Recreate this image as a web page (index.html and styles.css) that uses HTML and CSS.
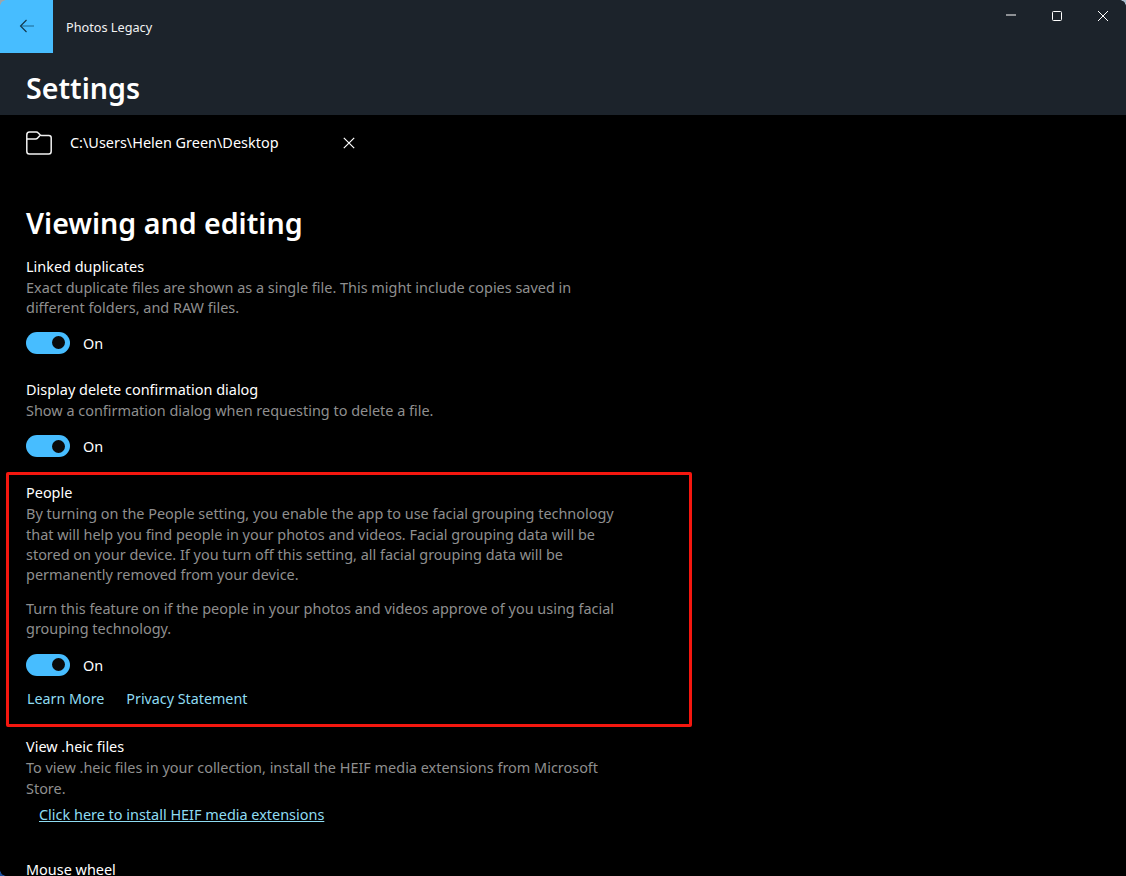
FILE: index.html
```html
<!DOCTYPE html>
<html lang="en">
<head>
    <meta charset="UTF-8">
    <title>Photos Legacy</title>
    <link rel="stylesheet" href="styles.css">
</head>
<body>
    <div class="window">
        <header class="top-bar">
            <div class="title-row">
                <button class="back-btn">
                    <svg width="16" height="14" viewBox="0 0 16 14" fill="none" stroke-width="1.1"><path stroke="#1f6f9c" d="M15 7H2"/><path stroke="#123447" d="M7.500 1L1.500 7l6 6"/></svg>
                </button>
                <span class="app-name">Photos Legacy</span>
                <div class="win-btns">
                    <svg width="12" height="12" viewBox="0 0 12 12" fill="none" stroke="#fff" stroke-width="1"><path d="M1 5h10"/></svg>
                    <svg width="12" height="12" viewBox="0 0 12 12" fill="none" stroke="#fff" stroke-width="1"><rect x="1.500" y="1.500" width="9" height="9" rx="1"/></svg>
                    <svg width="12" height="12" viewBox="0 0 12 12" fill="none" stroke="#fff" stroke-width="1"><path d="M1 1l10 10M11 1L1 11"/></svg>
                </div>
            </div>
            <h1 class="page-title">Settings</h1>
        </header>

        <main class="content">
            <div class="folder-row">
                <svg width="26" height="24" viewBox="0 0 26 24" fill="none" stroke="#f2f2f2" stroke-width="1.500"><path d="M.8 4C.8 2 1.800 1 3.500 1h6.700c1 0 1.500.3 2.100 1l1.500 1.600c.5.5 1 .8 1.700.8h7.400c1.500 0 2.300 1 2.300 2.400v13.400c0 1.800-.9 2.800-2.500 2.800H3.300C1.700 23 .8 22 .8 20.200z"/><path d="M.8 8h8.700c1 0 1.500-.3 2.100-.9l2.400-2.700"/></svg>
                <span class="folder-path">C:\Users\Helen Green\Desktop</span>
                <svg class="folder-x" width="12" height="12" viewBox="0 0 12 12" fill="none" stroke="#fff" stroke-width="1.200"><path d="M.8.800l10.400 10.400M11.200.800L.8 11.200"/></svg>
            </div>

            <h2 class="section-title">Viewing and editing</h2>

            <section class="setting">
                <h3>Linked duplicates</h3>
                <p>Exact duplicate files are shown as a single file. This might include copies saved in<br>different folders, and RAW files.</p>
                <div class="toggle-row"><span class="toggle"></span><span>On</span></div>
            </section>

            <section class="setting setting-delete">
                <h3>Display delete confirmation dialog</h3>
                <p>Show a confirmation dialog when requesting to delete a file.</p>
                <div class="toggle-row"><span class="toggle"></span><span>On</span></div>
            </section>

            <section class="setting people-box">
                <h3>People</h3>
                <p>By turning on the People setting, you enable the app to use facial grouping technology<br>that will help you find people in your photos and videos. Facial grouping data will be<br>stored on your device. If you turn off this setting, all facial grouping data will be<br>permanently removed from your device.</p>
                <p class="second-para">Turn this feature on if the people in your photos and videos approve of you using facial<br>grouping technology.</p>
                <div class="toggle-row"><span class="toggle"></span><span>On</span></div>
                <div class="link-row">
                    <a href="#">Learn More</a>
                    <a href="#">Privacy Statement</a>
                </div>
            </section>

            <section class="setting heic">
                <h3>View .heic files</h3>
                <p>To view .heic files in your collection, install the HEIF media extensions from Microsoft<br>Store.</p>
                <a class="install-link" href="#">Click here to install HEIF media extensions</a>
            </section>

            <section class="setting wheel">
                <h3>Mouse wheel</h3>
            </section>
        </main>

        <i class="corner corner-tl"></i>
        <i class="corner corner-tr"></i>
        <i class="corner corner-bl"></i>
    </div>
</body>
</html>
```

FILE: styles.css
```css
*{margin:0; padding:0; box-sizing: border-box}
html,body{height: 100%; overflow: hidden; background: #000;}
body{font-family: "Noto Sans", "Open Sans", sans-serif; font-size: 14.45px; line-height: 20px; color: #fff;}
a{color: #8fdcf2; text-decoration: none;}

.window{position: relative; width: 1126px; height: 876px; overflow: hidden; background: #000;}

.top-bar{height: 115px; background: #1c232b;}
.title-row{display: flex; align-items: flex-start; height: 53px;}
.back-btn{display: flex; align-items: center; justify-content: center; width: 53px; height: 53px; padding-bottom: 1px; border: 0; background: #47bdff;}
.app-name{margin: 17px 0 0 13px; font-size: 12.7px; color: #f2f2f2;}
.win-btns{display: flex; gap: 34px; margin: 10px 17px 0 auto;}
.page-title{margin: 15px 0 0 26px; font-size: 28.6px; line-height: 40px; font-weight: 600;}

.content{padding-top: 16px;}
.folder-row{display: flex; align-items: center; height: 24px; padding-left: 26px;}
.folder-path{margin-left: 18px; width: 273px;}
.folder-x{flex: none;}

.section-title{margin: 48px 0 0 26px; font-size: 28.6px; line-height: 40px; font-weight: 600;}

.setting{padding-left: 26px;}
.setting h3{padding-bottom: 2px; font-size: 14.45px; font-weight: 400; line-height: 19px; color: #fff;}
.setting p{line-height: 20.4px; color: #8f8f8f;}
.section-title + .setting{margin-top: 14px;}
.setting-delete{margin-top: 25px;}

.toggle-row{display: flex; align-items: center; gap: 13px; height: 22px; margin-top: 14px;}
.setting-delete .toggle-row{margin-top: 15px;}
.toggle{position: relative; width: 44px; height: 22px; margin-bottom: 2px; border-radius: 11px; background: #47bdff;}
.toggle::after{content: ""; position: absolute; top: 4.500px; right: 5px; width: 13px; height: 13px; border-radius: 50%; background: #0a0a0a;}

.people-box{width: 686px; height: 255px; margin: 14px 0 0 6px; padding: 8px 0 0 17px; border: 3px solid #f5170f; border-radius: 2px;}
.people-box .second-para{margin-top: 13px;}
.people-box .toggle-row{margin-top: 15px;}
.link-row{display: flex; gap: 22px; margin: 12px 0 0 1px; font-size: 14.3px;}

.heic{margin-top: 10px;}
.install-link{display: block; margin: 6px 0 0 13px; text-decoration: underline;}
.wheel{margin-top: 35px;}

.corner{position: absolute; width: 6px; height: 6px;}
.corner-tl{top: 0; left: 0; background: radial-gradient(circle at 100% 100%, transparent 5.5px, #9aa6ad 6px);}
.corner-tr{top: 0; right: 0; background: radial-gradient(circle at 0 100%, transparent 5.5px, #a9bdcc 6px);}
.corner-bl{bottom: 0; left: 0; background: radial-gradient(circle at 100% 0, transparent 5.5px, #1c4f9c 6px);}
```
